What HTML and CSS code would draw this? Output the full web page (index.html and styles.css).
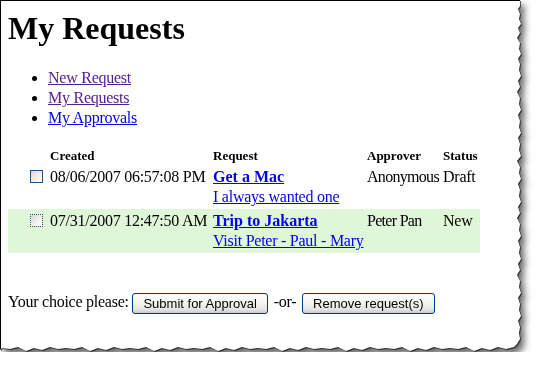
FILE: index.html
```html
<!DOCTYPE html>
<html lang="en">
<head>
<meta charset="utf-8">
<title>My Requests</title>
<link rel="stylesheet" href="styles.css">
</head>
<body>
<div class="frame">
  <div class="sheet">
    <h1 class="title">My Requests</h1>
    <ul class="nav">
      <li><a class="link link-visited" href="#">New Request</a></li>
      <li><a class="link link-visited" href="#">My Requests</a></li>
      <li><a class="link" href="#">My Approvals</a></li>
    </ul>
    <table class="requests">
      <colgroup>
        <col class="col-check">
        <col class="col-created">
        <col class="col-request">
        <col class="col-approver">
        <col class="col-status">
      </colgroup>
      <thead>
        <tr>
          <th></th>
          <th>Created</th>
          <th>Request</th>
          <th>Approver</th>
          <th>Status</th>
        </tr>
      </thead>
      <tbody>
        <tr>
          <td><input type="checkbox" class="check"></td>
          <td>08/06/2007 06:57:08 PM</td>
          <td><a class="link req-title" href="#">Get a Mac</a><br><a class="link" href="#">I always wanted one</a></td>
          <td class="approver">Anonymous</td>
          <td>Draft</td>
        </tr>
        <tr class="row-alt">
          <td><input type="checkbox" class="check check-focus"></td>
          <td>07/31/2007 12:47:50 AM</td>
          <td><a class="link req-title" href="#">Trip to Jakarta</a><br><a class="link" href="#">Visit Peter - Paul - Mary</a></td>
          <td class="approver">Peter Pan</td>
          <td>New</td>
        </tr>
      </tbody>
    </table>
    <p class="actions">Your choice please: <button class="btn" type="button">Submit for Approval</button> <span class="or">-or-</span> <button class="btn" type="button">Remove request(s)</button></p>
  </div>
</div>
</body>
</html>
```

FILE: styles.css
```css
html, body {
  margin: 0;
  padding: 0;
  background: #fff;
}

body {
  font-family: "Liberation Serif", "Times New Roman", serif;
  font-size: 16px;
  letter-spacing: -0.25px;
  color: #000;
}

.frame {
  width: 522px;
  height: 352px;
  filter: drop-shadow(1px 1px 0 rgba(0, 0, 0, 0.6)) drop-shadow(4px 5px 3.5px rgba(0, 0, 0, 0.6));
}

.sheet {
  box-sizing: border-box;
  width: 522px;
  height: 352px;
  background: #fff;
  border-left: 1px solid #000;
  border-top: 1px solid #000;
  padding-left: 7px;
  overflow: hidden;
  clip-path: polygon(
    0 0, 520px 0, 520px 6px, 518px 9px, 520px 14px, 519px 19px, 521px 24px, 518px 28px, 520px 33px, 517px 38px,
    520px 43px, 519px 49px, 521px 54px, 518px 59px, 520px 64px, 519px 70px, 521px 76px, 518px 81px, 520px 87px,
    517px 92px, 520px 98px, 519px 104px, 521px 110px, 518px 115px, 520px 121px, 519px 127px, 521px 133px,
    518px 138px, 520px 144px, 519px 150px, 521px 156px, 517px 161px, 520px 167px, 519px 173px, 521px 179px,
    518px 184px, 520px 190px, 519px 196px, 521px 202px, 518px 207px, 520px 213px, 517px 218px, 520px 224px,
    519px 230px, 521px 236px, 518px 241px, 520px 247px, 519px 253px, 521px 259px, 518px 264px, 520px 270px,
    517px 275px, 520px 281px, 519px 287px, 521px 293px, 518px 298px, 520px 304px, 519px 310px, 521px 316px,
    518px 321px, 520px 327px, 519px 333px, 520px 339px, 517px 344px, 514px 347px,
    506px 349px, 498px 347px, 490px 350px, 482px 348px, 474px 351px, 466px 347px, 458px 349px, 450px 348px,
    442px 349px, 434px 347px, 426px 350px, 418px 348px, 410px 351px, 402px 347px, 394px 349px, 386px 348px,
    378px 349px, 370px 347px, 362px 350px, 354px 348px, 346px 351px, 338px 347px, 330px 349px, 322px 348px,
    314px 349px, 306px 347px, 298px 350px, 290px 348px, 282px 351px, 274px 347px, 266px 349px, 258px 348px,
    250px 349px, 242px 347px, 234px 350px, 226px 348px, 218px 351px, 210px 347px, 202px 349px, 194px 348px,
    186px 349px, 178px 347px, 170px 350px, 162px 348px, 154px 351px, 146px 347px, 138px 349px, 130px 348px,
    122px 349px, 114px 347px, 106px 350px, 98px 348px, 90px 351px, 82px 347px, 74px 349px, 66px 348px,
    58px 349px, 50px 347px, 42px 350px, 34px 348px, 26px 351px, 18px 347px, 10px 349px, 2px 348px, 0 350px
  );
}

.title {
  margin: 9px 0 22px;
  font-size: 32px;
  line-height: 36px;
  font-weight: bold;
  letter-spacing: 0;
}

.nav {
  margin: 0 0 18px;
  padding-left: 40px;
  line-height: 20px;
}

.link {
  color: #0000ee;
  text-decoration: underline;
}

.link-visited {
  color: #54208f;
}

.requests {
  border-collapse: collapse;
  border-spacing: 0;
  table-layout: fixed;
  width: 472px;
}

.col-check { width: 42px; }
.col-created { width: 163px; }
.col-request { width: 154px; }
.col-approver { width: 76px; }
.col-status { width: 37px; }

.requests th {
  padding: 2px 0;
  font-size: 13px;
  line-height: 15px;
  font-weight: bold;
  letter-spacing: 0;
  text-align: left;
  vertical-align: bottom;
  white-space: nowrap;
}

.requests td {
  padding: 2px 0;
  line-height: 20px;
  vertical-align: top;
  white-space: nowrap;
}

.requests td.approver {
  letter-spacing: -0.7px;
}

.row-alt td {
  background: #dff6d8;
}

.req-title {
  font-weight: bold;
  letter-spacing: 0;
}

.check {
  appearance: none;
  -webkit-appearance: none;
  display: block;
  box-sizing: border-box;
  width: 13px;
  height: 13px;
  margin: 3px 0 0 22px;
  border: 1px solid #1c5180;
  background: linear-gradient(135deg, #d8d8d2 0%, #f2f2ee 60%, #ffffff 100%);
}

.check-focus {
  border: 1px dotted #2a4f7a;
}

.actions {
  margin: 38px 0 0;
  line-height: 22px;
}

.or {
  margin: 0 2px;
}

.btn {
  box-sizing: border-box;
  height: 21px;
  padding: 0 10px;
  margin: 0;
  vertical-align: middle;
  font-family: "Liberation Sans", Arial, sans-serif;
  font-size: 13px;
  letter-spacing: 0;
  color: #000;
  border: 1px solid #003c74;
  border-radius: 3px;
  background: linear-gradient(to bottom, #ffffff 0%, #f4f4f0 45%, #e6e5de 80%, #cdcad8 100%);
}
```
